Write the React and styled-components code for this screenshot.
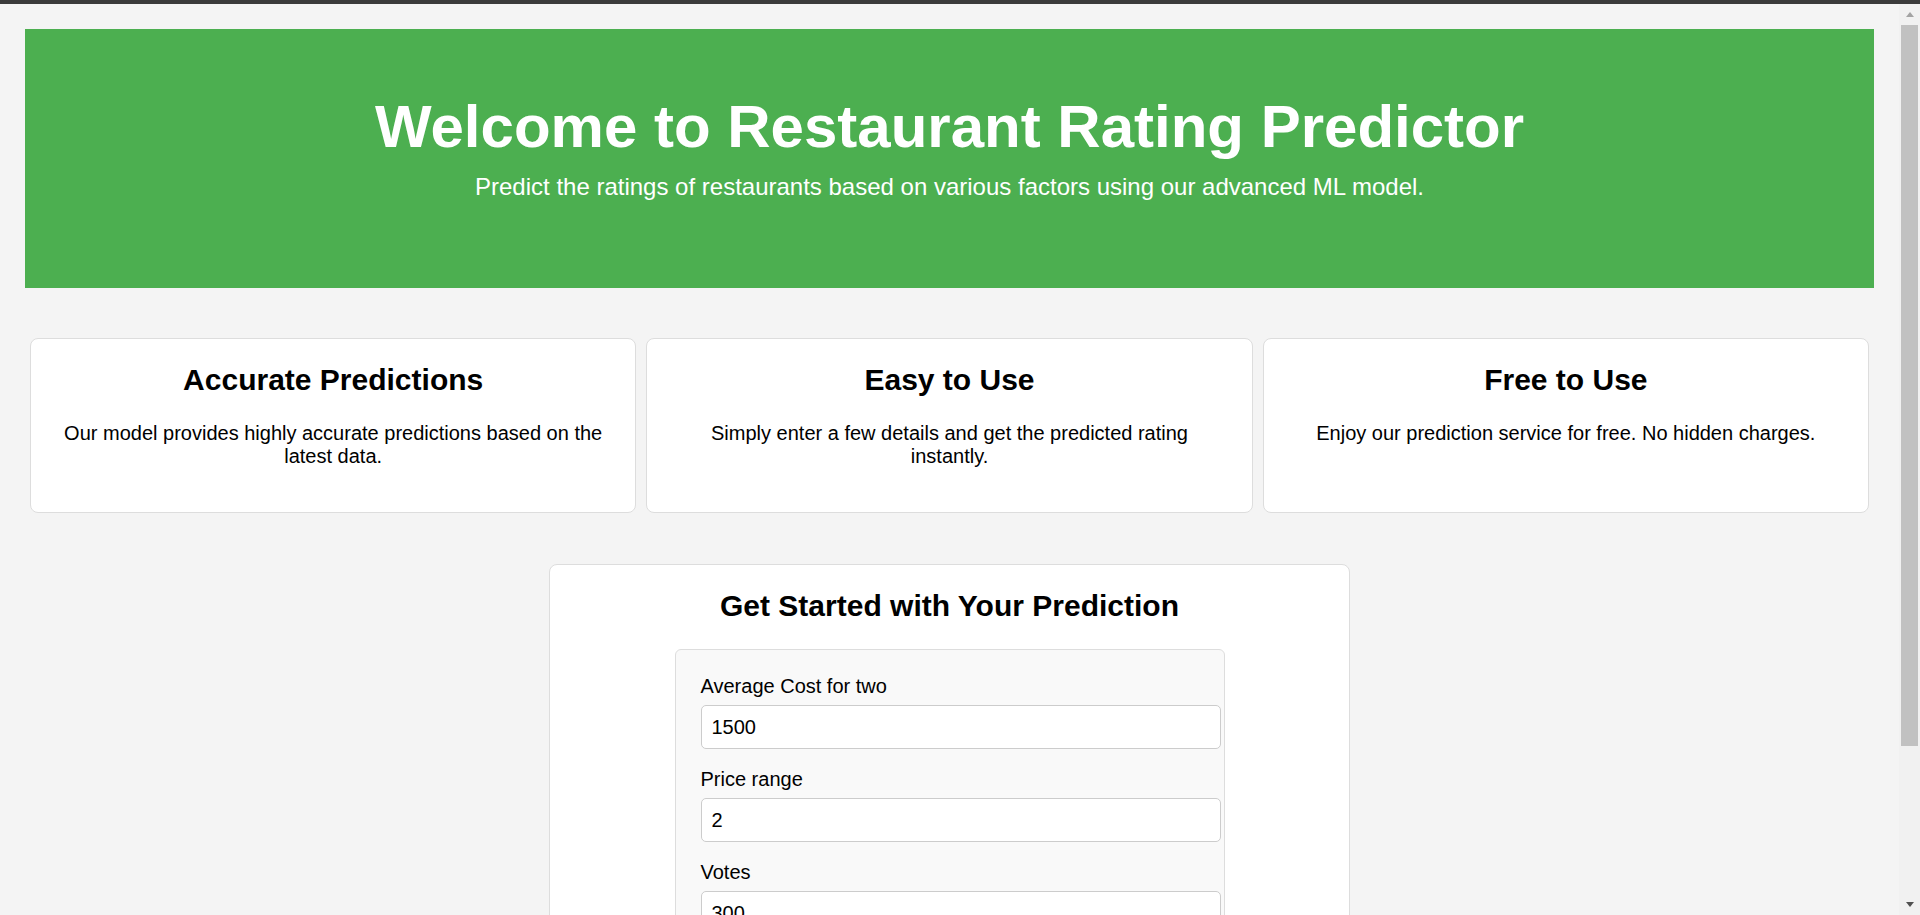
import React, { useState } from 'react';
import styled, { createGlobalStyle } from 'styled-components';

const GlobalStyle = createGlobalStyle`
  html, body {
    margin: 0;
    padding: 0;
    background: #f4f4f4;
    font-family: "Liberation Sans", Arial, sans-serif;
    color: #000;
  }
`

const TopStrip = styled.div`
  height: 4px;
  background: #3b3b3b;
`

// stand-in for the window scrollbar seen in the screenshot
const ScrollRail = styled.div`
  position: fixed;
  top: 4px;
  right: 0;
  bottom: 0;
  width: 21px;
  background: #f1f1f1;
  display: flex;
  flex-direction: column;
  align-items: center;
`

const ScrollArrow = styled.div`
  height: 21px;
  width: 100%;
  display: flex;
  align-items: center;
  justify-content: center;

  &::before {
    content: '';
    width: 0;
    height: 0;
    border-left: 4.5px solid transparent;
    border-right: 4.5px solid transparent;
    ${(p) => p.$down
      ? `border-top: 5px solid ${p.$color};`
      : `border-bottom: 5px solid ${p.$color};`}
  }
`

const ScrollThumb = styled.div`
  width: 17px;
  height: 721px;
  background: #c1c1c1;
`

const Page = styled.main`
  margin-right: 21px;
  padding: 25px 25px 59px;
`

const Hero = styled.header`
  background: #4caf50;
  color: #fff;
  text-align: center;
  padding: 63px 20px 87px;
`

const HeroTitle = styled.h1`
  font-size: 60px;
  font-weight: bold;
  margin: 0 0 12px;
`

const HeroText = styled.p`
  font-size: 24px;
  margin: 0;
`

const Features = styled.section`
  display: flex;
  margin: 45px 0 46px;
`

const FeatureCard = styled.div`
  flex: 1;
  margin: 5px;
  background: #fff;
  border: 1px solid #ddd;
  border-radius: 8px;
  padding: 24px 25px;
  text-align: center;
`

const CardTitle = styled.h2`
  font-size: 30px;
  font-weight: bold;
  margin: 0 0 ${(p) => p.$gap || 25}px;
`

const CardText = styled.p`
  font-size: 20px;
  margin: 0 0 20px;
`

const FormCard = styled.section`
  width: 801px;
  box-sizing: border-box;
  margin: 0 auto;
  background: #fff;
  border: 1px solid #ddd;
  border-radius: 8px;
  padding: 24px;
  text-align: center;
`

const FormBox = styled.form`
  width: 550px;
  box-sizing: border-box;
  margin: 0 auto;
  background: #f9f9f9;
  border: 1px solid #ddd;
  border-radius: 6px;
  padding: 25px;
  text-align: left;
`

const Label = styled.label`
  display: block;
  font-size: 20px;
  margin-bottom: 7px;
`

const Input = styled.input`
  display: block;
  width: 100%;
  padding: 9.5px 10px;
  margin: 0 0 19px;
  border: 1px solid #ccc;
  border-radius: 5px;
  background: #fff;
  font-family: "Liberation Sans", Arial, sans-serif;
  font-size: 20px;
  color: #000;
`

const SubmitButton = styled.button`
  width: 100%;
  padding: 12px 0;
  border: none;
  border-radius: 5px;
  background: #4caf50;
  color: #fff;
  font-family: "Liberation Sans", Arial, sans-serif;
  font-size: 20px;
  cursor: pointer;
`

const Spacer = styled.div`
  flex: 1;
`

const features = [
  {
    title: 'Accurate Predictions',
    text: 'Our model provides highly accurate predictions based on the latest data.',
  },
  {
    title: 'Easy to Use',
    text: 'Simply enter a few details and get the predicted rating instantly.',
  },
  {
    title: 'Free to Use',
    text: 'Enjoy our prediction service for free. No hidden charges.',
  },
]

const fields = [
  { name: 'cost', label: 'Average Cost for two', value: '1500' },
  { name: 'price', label: 'Price range', value: '2' },
  { name: 'votes', label: 'Votes', value: '300' },
]

export default function App() {
  const [values, setValues] = useState(
    Object.fromEntries(fields.map((f) => [f.name, f.value]))
  )

  return (
    <>
      <GlobalStyle />
      <TopStrip />
      <Page>
        <Hero>
          <HeroTitle>Welcome to Restaurant Rating Predictor</HeroTitle>
          <HeroText>Predict the ratings of restaurants based on various factors using our advanced ML model.</HeroText>
        </Hero>

        <Features>
          {features.map((f) => (
            <FeatureCard key={f.title}>
              <CardTitle>{f.title}</CardTitle>
              <CardText>{f.text}</CardText>
            </FeatureCard>
          ))}
        </Features>

        <FormCard>
          <CardTitle $gap={26}>Get Started with Your Prediction</CardTitle>
          <FormBox onSubmit={(e) => e.preventDefault()}>
            {fields.map((f) => (
              <div key={f.name}>
                <Label htmlFor={f.name}>{f.label}</Label>
                <Input
                  id={f.name}
                  type="text"
                  value={values[f.name]}
                  onChange={(e) => setValues({ ...values, [f.name]: e.target.value })}
                />
              </div>
            ))}
            <SubmitButton type="submit">Predict Rating</SubmitButton>
          </FormBox>
        </FormCard>
      </Page>

      <ScrollRail>
        <ScrollArrow $color="#a3a3a3" />
        <ScrollThumb />
        <Spacer />
        <ScrollArrow $down $color="#505050" />
      </ScrollRail>
    </>
  )
}
